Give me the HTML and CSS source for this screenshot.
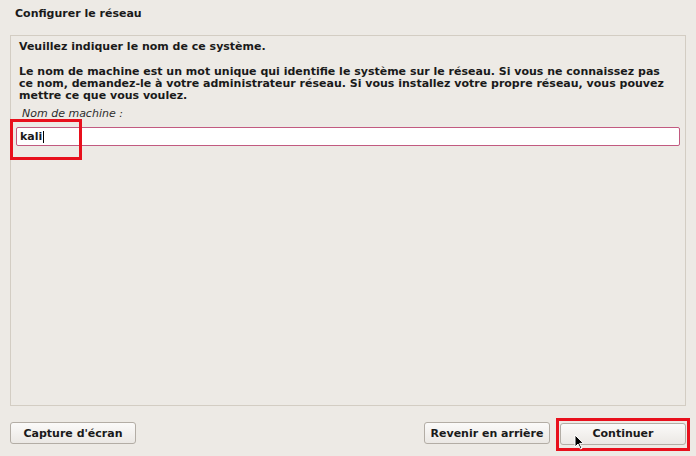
FILE: index.html
```html
<!DOCTYPE html>
<html lang="fr">
<head>
  <meta charset="UTF-8" />
  <title>Configurer le réseau</title>
  <link rel="stylesheet" href="styles.css">
</head>
<body>
  <div class="window">
    <div class="title">Configurer le réseau</div>

    <div class="panel">
      <p class="question">Veuillez indiquer le nom de ce système.</p>
      <p class="help">Le nom de machine est un mot unique qui identifie le système sur le réseau. Si vous ne connaissez pas ce nom, demandez-le à votre administrateur réseau. Si vous installez votre propre réseau, vous pouvez mettre ce que vous voulez.</p>
      <div class="label">Nom de machine :</div>
      <div class="field-row">
        <div class="entry"><span class="value">kali</span><span class="caret"></span></div>
        <div class="mark mark-entry"></div>
      </div>
    </div>

    <div class="buttons">
      <button class="btn">Capture d'écran</button>
      <div class="right">
        <button class="btn">Revenir en arrière</button>
        <div class="btn-wrap">
          <button class="btn btn-wide">Continuer</button>
          <div class="mark mark-btn"></div>
          <svg class="pointer" width="11" height="16" viewBox="0 0 11 16">
            <path d="M1 1 L1 13 L4 10 L6.5 15 L8 14.3 L5.6 9.4 L9.5 9.4 Z" fill="#000" stroke="#fff" stroke-width="1"/>
          </svg>
        </div>
      </div>
    </div>
  </div>
</body>
</html>
```

FILE: styles.css
```css
body {
  margin: 0;
  background: #edeae5;
  font-family: "DejaVu Sans", sans-serif;
  color: #1a1a1a;
}

.window {
  width: 696px;
  height: 456px;
  padding: 0 10px;
  box-sizing: border-box;
  display: flex;
  flex-direction: column;
}

.title {
  font-size: 11px;
  font-weight: bold;
  padding: 7px 0 0 5px;
  height: 35px;
  box-sizing: border-box;
}

.panel {
  height: 371px;
  border: 1px solid #d3cdc3;
  box-sizing: border-box;
  padding: 5px 5px 0 8px;
  font-size: 11px;
  font-weight: bold;
  line-height: 12px;
}

.question {
  margin: 0 0 13px;
}

.help {
  margin: 0;
  padding-right: 12px;
}

.label {
  font-weight: normal;
  font-style: italic;
  color: #2e2e2e;
  margin: 6px 0 0 3px;
  height: 14px;
}

.field-row {
  position: relative;
  margin: 5px 0 0 -3px;
}

.entry {
  height: 19px;
  box-sizing: border-box;
  border: 1px solid #c25a80;
  border-radius: 2px;
  background: #fff;
  padding: 3px 0 0 3px;
  display: flex;
  align-items: flex-start;
}

.value {
  font-size: 11px;
  font-weight: bold;
}

.caret {
  width: 1px;
  height: 12px;
  margin-left: 1px;
  background: #000;
}

.mark {
  position: absolute;
  border: 3px solid #e8101c;
  pointer-events: none;
}

.mark-entry {
  left: -6px;
  top: -8px;
  width: 66px;
  height: 35px;
}

.buttons {
  display: flex;
  justify-content: space-between;
  align-items: center;
  margin-top: 16px;
}

.right {
  display: flex;
  gap: 10px;
}

.btn {
  font-family: "DejaVu Sans", sans-serif;
  font-size: 11px;
  font-weight: bold;
  color: #1a1a1a;
  height: 22px;
  width: 126px;
  border: 1px solid #b3ada5;
  border-radius: 3px;
  background: linear-gradient(#fbfaf9, #ebe8e4);
  padding: 0;
}

.btn-wrap {
  position: relative;
}

.mark-btn {
  left: -4px;
  top: -4px;
  width: 128px;
  height: 27px;
}

.pointer {
  position: absolute;
  left: 14px;
  top: 12px;
}
```
